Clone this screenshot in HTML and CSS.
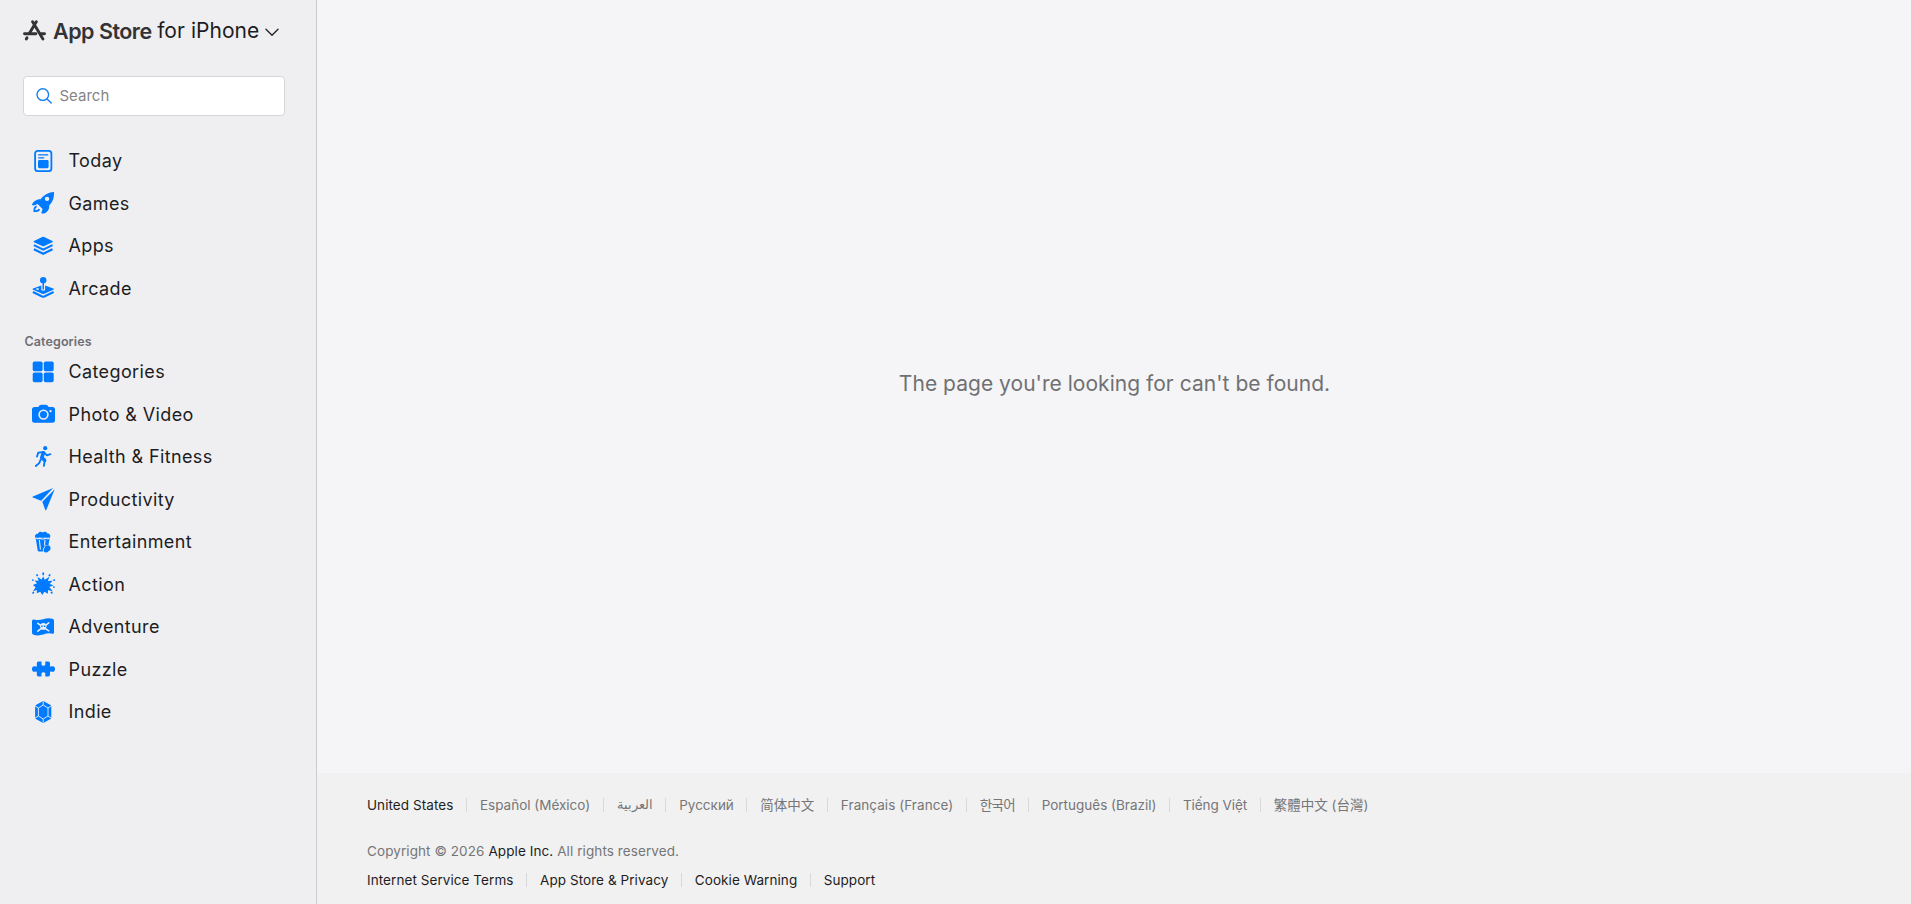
FILE: index.html
```
<!DOCTYPE html>
<html lang="en">
<head>
<meta charset="utf-8">
<title>App Store</title>
<link rel="stylesheet" href="styles.css">
</head>
<body>
<div class="app">
  <nav class="sidebar">
    <header class="brand">
      <svg class="brand-logo" viewBox="0 0 23 21" fill="none" stroke="#333336" stroke-width="2.9" stroke-linecap="round"><path d="M13.3 1.800 6.600 13M9.600 1.800l1.500 2.300M12.500 6.400l7.400 12.700" /><path d="M1.500 13.800h11.400M18.200 13.800h3.300M4 17.700l-.7 1.200"/></svg>
      <span class="brand-name">App Store</span><span class="brand-platform">for iPhone</span>
      <svg class="brand-chevron" viewBox="0 0 14 9" fill="none" stroke="#242426" stroke-width="1.4" stroke-linecap="round" stroke-linejoin="round"><path d="m1 1.200 6 6 6-6"/></svg>
    </header>
    <label class="search">
      <svg class="search-icon" viewBox="0 0 16 16" fill="none" stroke="#1480f0" stroke-width="1.4" stroke-linecap="round"><circle cx="6.800" cy="6.600" r="5.800"/><path d="m11.100 10.900 4.100 4.100"/></svg>
      <span class="search-text">Search</span>
    </label>
    <ul class="nav-list nav-main">
      <li class="nav-item"><svg class="icon" viewBox="0 0 24 24"><rect x="3.100" y="1.900" width="16.300" height="20.200" rx="2.600" fill="none" stroke="currentColor" stroke-width="1.800"/><path d="M6.200 5.800h10M6.200 8.800h6" stroke="currentColor" stroke-width="1.200"/><rect x="6" y="11" width="10.600" height="8.200" rx="1.400"/></svg><span>Today</span></li>
      <li class="nav-item"><svg class="icon" viewBox="0 0 24 24"><path fill-rule="evenodd" d="M22 1.100c.3 5.200-1 9.600-4.800 13.300.5 3.700-1.400 6.500-4.800 8-.8.3-2.200.3-3.200-.2l1.400-4.200-5-5-3.700 1.400c-.8.1-2.200-.4-1.800-1.200 1.400-2.900 4.900-5.400 8.500-5 3.700-4.300 8-6.900 13.400-7.100zM15 5.700a2.200 2.200 0 1 0 .1 4.400A2.200 2.200 0 0 0 15 5.700z"/><path d="M4.700 15.400c-1.700.4-2.500 2.300-2.400 4.800 2.500.1 4.400-.5 5-2.100" fill="none" stroke="currentColor" stroke-width="1.700"/></svg><span>Games</span></li>
      <li class="nav-item"><svg class="icon" viewBox="0 0 24 24"><path d="M10.200 3.100q1-.5 2 0l8.200 3.900q1.100.6 0 1.200l-8.200 3.900q-1 .5-2 0L2 8.200q-1.100-.6 0-1.200z"/><path d="m1.900 11.100 9.300 4.500 9.300-4.500M1.900 15.300l9.300 4.500 9.300-4.500" fill="none" stroke="currentColor" stroke-width="2.100"/></svg><span>Apps</span></li>
      <li class="nav-item"><svg class="icon" viewBox="0 0 24 24"><circle cx="11.200" cy="4.200" r="3.200"/><path d="M10.500 6h1.500v7.500h-1.500z"/><path fill-rule="evenodd" d="M9.300 9.500v4c0 1.600 3.800 1.600 3.800 0v-4l8.200 3q1.200.6 0 1.200l-9 4.100q-1.100.4-2.200 0l-9-4.100q-1.200-.6 0-1.200zM5.500 12.200c-2 0-2 1.700 0 1.700s2-1.700 0-1.700z"/><path d="m.9 16 9.200 4.500q1.100.4 2.200 0l9.300-4.500" fill="none" stroke="currentColor" stroke-width="2"/></svg><span>Arcade</span></li>
    </ul>
    <h2 class="nav-heading">Categories</h2>
    <ul class="nav-list nav-categories">
      <li class="nav-item"><svg class="icon" viewBox="0 0 24 24"><rect x=".7" y="1.400" width="9.900" height="9.800" rx="1.800"/><rect x="11.800" y="1.400" width="9.900" height="9.800" rx="1.800"/><rect x=".7" y="12.400" width="9.900" height="9.800" rx="1.800"/><rect x="11.800" y="12.400" width="9.900" height="9.800" rx="1.800"/></svg><span>Categories</span></li>
      <li class="nav-item"><svg class="icon" viewBox="0 0 24 24"><path fill-rule="evenodd" d="M2.600 5h3.600l1.500-1.700Q8.300 2.700 9.200 2.700h4.600q.9 0 1.500.6L16.800 5h3.700Q23 5 23 7.500v10.800q0 2.500-2.500 2.500h-18Q0 20.800 0 18.300V7.500Q0 5 2.600 5zM11.500 7.400a5.200 5.200 0 1 0 0 10.400 5.200 5.200 0 0 0 0-10.400zm7 .5a1.200 1.200 0 1 0 0 2.400 1.200 1.200 0 0 0 0-2.400z"/><circle cx="11.500" cy="12.600" r="3.600"/></svg><span>Photo &amp; Video</span></li>
      <li class="nav-item"><svg class="icon" viewBox="0 0 24 24"><circle cx="13.200" cy="3.200" r="2.100"/><path d="m11.400 7.800-1.600 4.700 2.800 2.700" fill="none" stroke="currentColor" stroke-width="3.600" stroke-linejoin="round" stroke-linecap="round"/><path d="m12.800 15.300-.9 5.500M10.500 7.100 6.200 7.700l-1.200 3.800M13 8.300l1.900 2 3.500-1.100M8.700 14.500l-1.500 3.600-3.400 2.900" fill="none" stroke="currentColor" stroke-width="1.900" stroke-linejoin="round" stroke-linecap="round"/></svg><span>Health &amp; Fitness</span></li>
      <li class="nav-item"><svg class="icon" viewBox="0 0 24 24"><path d="M21.200 1.100.9 9.400q-1.100.6 0 1.200l8.300 3.200z"/><path d="M22.700 2.300 10.300 14.700l2.900 8q.6 1 1.200 0z"/></svg><span>Productivity</span></li>
      <li class="nav-item"><svg class="icon" viewBox="0 0 24 24"><path d="M3.500 7.600C2.200 5.500 3.800 3.500 6 3.700 6.800 1.700 9 1.300 10.600 2.500c1.900-1.200 4-.6 4.800 1.100 2.200-.1 3.700 2 2.500 4z"/><path d="m3.600 7.400 2.100 13q.2 1.100 1.200 1.100h4.300q-1.200-2.600.9-4.300.9-2.500 3.500-2l.8.200 1.300-8z"/><path d="M4.300 8.200q1.800 1.200 3.600 0 2.800 1.600 5.500 0 2 1.200 3.700 0M7.400 10l1 9.500M13 10l-.5 5.500" fill="none" stroke="#efeff2" stroke-width="1.100"/><circle cx="15.600" cy="18.200" r="2.900"/><circle cx="14.100" cy="19.900" r="2.500"/></svg><span>Entertainment</span></li>
      <li class="nav-item"><svg class="icon" viewBox="0 0 24 24"><path d="m11.200 4.600 1.600 3.200 4.600-3-1.500 4.300 4.700-.3-2.900 3.100 3.900 1.400-4.200 1.600 3.400 4.700-4.700-1.500-.2 3.700-3.500-2.100-2.200 3.200-1.900-3.200-3.500 1.600.1-3.200-3.900 1.200 2.600-4L.9 12.900l4.100-1.600-2.400-2.900 4 .3-1.100-3.600 4 2.300z"/><g stroke="currentColor" stroke-width="1.700" stroke-linecap="round"><path d="M11.200 1v1.500M5 3l.3.400M17.700 3l-.4.500M1.400 20.500l-.3.500M19.400 20.500l.5.500M22 8.100h.3M.8 8.100h.1M21.900 15.100h.1"/></g></svg><span>Action</span></li>
      <li class="nav-item"><svg class="icon" viewBox="0 0 24 24"><path d="M0 6Q0 4.300 1.800 4.500q4.800 1.300 9.400-.2 4.800-1.600 9-.5Q22 4.100 22 5.500v12q0 1.500-1.600 1.200-4-1-9.200.9-4.700 1.500-9.700.2Q0 19.300 0 17.700z"/><g fill="none" stroke="#efeff2" stroke-width="1.500" stroke-linecap="round"><path d="m5.800 8.300 11 7.500M16.800 7.900 5.800 16.200"/></g><path fill="#efeff2" d="M11.300 7.900c2.200 0 3.300 1.400 3.300 3 0 1.300-.8 2-1.300 2.400v1.500H9.300v-1.500c-.7-.5-1.300-1.100-1.300-2.400 0-1.600 1.100-3 3.300-3z"/><path d="M9.200 10.500h1.500v1.600H9.200zM11.900 10.500h1.500v1.600h-1.500z"/></svg><span>Adventure</span></li>
      <li class="nav-item"><svg class="icon" viewBox="0 0 24 24"><path d="M6.500 4.500h2.200q1.200 0 .9 1.300-.8 2.900 1.800 2.900t1.800-2.900q-.3-1.300.9-1.300h2.200q1.700 0 1.700 1.700v2.700q0 .8.800.6 4.200-1.300 4.200 2.500t-4.200 2.500q-.8-.2-.8.600v2.700q0 1.700-1.700 1.700h-2.200q-1.200 0-.9-1.300.8-2.900-1.800-2.900t-1.800 2.900q.3 1.300-.9 1.300H6.500q-1.700 0-1.700-1.700v-2.700q0-.8-.8-.6Q0 15.800 0 12t4-2.500q.8.200.8-.6V6.200q0-1.700 1.700-1.700z"/></svg><span>Puzzle</span></li>
      <li class="nav-item"><svg class="icon" viewBox="0 0 24 24"><path d="m10.200 1.600q1-.5 2 0l6.300 3.300q.8.500.8 1.500v11.200q0 1-.8 1.500l-6.300 3.300q-1 .5-2 0l-6.300-3.300q-.8-.5-.8-1.500V6.400q0-1 .8-1.500z"/><path d="m11.200 5 4.800 3v8l-4.800 3-4.800-3V8zM11.200 1.500V5M11.200 19v3.500M3 5.800 6.400 8M19.400 5.800 16 8M3 18.200 6.400 16M19.400 18.200 16 16" fill="none" stroke="#efeff2" stroke-width=".9"/></svg><span>Indie</span></li>
    </ul>
  </nav>
  <div class="content">
    <main class="message"><p>The page you're looking for can't be found.</p></main>
    <footer class="footer">
      <ul class="links locales">
        <li class="current">United States</li><li>Español (México)</li><li class="ar"><span lang="ar">العربية</span></li><li>Русский</li><li lang="zh-CN">简体中文</li><li class="loose">Français (France)</li><li class="ko" lang="ko">한국어</li><li>Português (Brazil)</li><li class="vi">Tiếng Việt</li><li lang="zh-TW">繁體中文 (台灣)</li>
      </ul>
      <p class="copyright">Copyright © 2026 <a>Apple Inc.</a> All rights reserved.</p>
      <ul class="links legal"><li>Internet Service Terms</li><li>App Store &amp; Privacy</li><li>Cookie Warning</li><li>Support</li></ul>
    </footer>
  </div>
</div>
</body>
</html>
```
FILE: styles.css
```
* { box-sizing: border-box; }
body { margin: 0; font-family: Inter, "Noto Sans CJK SC", "Noto Sans", sans-serif; color: #1d1d1f; background: #f5f5f7; }
ul { list-style: none; margin: 0; padding: 0; }
.app { display: flex; height: 904px; overflow: hidden; }
.sidebar { flex: none; width: 317px; background: #efeff2; border-right: 1px solid #cbcbce; }
.brand { display: flex; align-items: center; height: 61px; padding-left: 23px; white-space: nowrap; }
.brand-logo { width: 23px; height: 21px; margin-right: 7px; }
.brand-name { font-size: 21.5px; font-weight: 600; letter-spacing: -.5px; color: #333336; }
.brand-platform { font-size: 21px; margin-left: 5.5px; letter-spacing: .05px; }
.brand-chevron { width: 14px; height: 9px; margin: 3px 0 0 6px; }
.search { display: flex; align-items: center; width: 262px; height: 40px; margin: 15px 0 0 23px; padding: 0 0 1px 11.5px; background: #fff; border: 1px solid #d6d6d8; border-radius: 4px; }
.search-icon { width: 16px; height: 16px; }
.search-text { margin-left: 8px; font-size: 15px; color: #858587; }
.nav-main { margin-top: 23.5px; }
.nav-item { display: flex; align-items: center; height: 42.5px; padding-left: 32px; font-size: 18px; letter-spacing: .38px; white-space: nowrap; }
.icon { width: 24px; height: 24px; margin-right: 12.5px; fill: currentColor; color: #007aff; }
.nav-heading { height: 20px; margin: 22.5px 0 0 24.5px; font-size: 12.5px; line-height: 20px; font-weight: 600; letter-spacing: .1px; color: #6e6e72; }
.nav-categories { margin-top: -1.5px; }
.content { flex: 1; display: flex; flex-direction: column; }
.message { flex: 1; display: flex; align-items: center; justify-content: center; padding: 0 0 6px 1px; font-size: 21px; letter-spacing: .03px; color: #707073; }
.message p { margin: 0; }
.footer { height: 131px; padding: 22px 0 0 50px; background: #f1f1f1; font-size: 13.5px; color: #767678; }
.links { display: flex; height: 20px; line-height: 20px; white-space: nowrap; }
.links li { display: flex; }
.links li + li::before { content: ""; width: 1px; height: 14px; margin: 3px 13px 0 12.5px; background: #d8d8da; }
.ar span { font-size: 12.8px; }
.ko { letter-spacing: -.6px; }
.vi { letter-spacing: -.05px; }
.current, .legal, .copyright a { color: #1d1d1f; }
.current, .legal { letter-spacing: .07px; }
.loose { letter-spacing: .06px; }
.copyright { height: 20px; margin: 26px 0 9px; line-height: 20px; letter-spacing: .09px; }
```
